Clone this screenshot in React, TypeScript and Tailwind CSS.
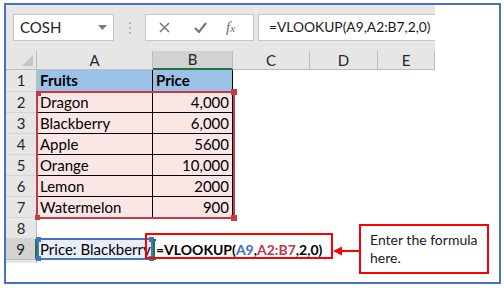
const rows: [string, string][] = [
  ["Dragon", "4,000"],
  ["Blackberry", "6,000"],
  ["Apple", "5600"],
  ["Orange", "10,000"],
  ["Lemon", "2000"],
  ["Watermelon", "900"],
];

const cols = ["A", "B", "C", "D", "E"];

function Handle({ className }: { className: string }) {
  return <div className={"absolute h-[5px] w-[5px] " + className} />;
}

function RowHead({ n, active }: { n: number; active?: boolean }) {
  return (
    <div
      className={
        "flex items-center justify-center border-b text-[15px] text-[#262626] " +
        (active
          ? "border-b-[#bdbdbd] bg-[#d2d2d2] border-r-2 border-r-[#217346]"
          : "border-b-[#d4d4d4] bg-[#e6e6e6] border-r border-r-[#bdbdbd]")
      }
    >
      {n}
    </div>
  );
}

function FormulaBar() {
  return (
    <div className="flex h-[46px] items-start bg-[#e6e6e6] pl-[7px] pt-[9px]">
      <div className="flex h-[27px] w-[101px] items-center justify-between border border-[#c6c6c6] bg-white pl-[6px] pr-[6px] text-[15px] text-[#262626]">
        <span>COSH</span>
        <svg width="9" height="5" viewBox="0 0 9 5">
          <path d="M0 0 L9 0 L4.5 5 Z" fill="#7a7a7a" />
        </svg>
      </div>
      <div className="flex h-[27px] w-[31px] items-center justify-center">
        <div className="flex flex-col gap-[3px]">
          <div className="h-[2px] w-[2px] bg-[#b5b5b5]" />
          <div className="h-[2px] w-[2px] bg-[#b5b5b5]" />
          <div className="h-[2px] w-[2px] bg-[#b5b5b5]" />
        </div>
      </div>
      <div className="flex h-[27px] w-[109px] items-center border border-[#c6c6c6] bg-white">
        <svg className="ml-[13px]" width="11" height="11" viewBox="0 0 11 11">
          <path d="M1 1 L10 10 M10 1 L1 10" stroke="#7a7a7a" strokeWidth="1.6" />
        </svg>
        <svg className="ml-[24px]" width="13" height="11" viewBox="0 0 13 11">
          <path d="M1 6 L5 10 L12 1" stroke="#7a7a7a" strokeWidth="2.2" fill="none" />
        </svg>
        <span className="ml-[19px] font-['Liberation_Serif',serif] text-[15px] italic text-[#6e6e6e]">
          f<span className="text-[11px]">x</span>
        </span>
      </div>
      <div className="ml-[4px] flex h-[27px] flex-1 items-center overflow-hidden border-y border-l border-[#c6c6c6] bg-white pl-[10px] text-[13.8px] whitespace-nowrap text-[#1a1a1a]">
        =VLOOKUP(A9,A2:B7,2,0)
      </div>
    </div>
  );
}

export default function App() {
  return (
    <div className="h-[288px] w-[504px] overflow-hidden bg-white pl-[4px] pt-[3px] font-[Lato,'Liberation_Sans',sans-serif]">
      <div className="relative h-[281px] w-[497px] border-2 border-[#4472c4]">
        <div className="w-[429px]">
          <FormulaBar />
          <div className="grid grid-cols-[31px_116px_80px_77px_68px_57px] grid-rows-[19px_22px_repeat(8,21px)_3px]">
            {/* header row */}
            <div className="flex items-end justify-end border-r border-b border-[#bdbdbd] bg-[#e6e6e6] pb-[3px] pr-[3px]">
              <svg width="11" height="11" viewBox="0 0 11 11">
                <path d="M11 0 L11 11 L0 11 Z" fill="#c4c4c4" />
              </svg>
            </div>
            {cols.map((c) => (
              <div
                key={c}
                className={
                  "flex items-center justify-center border-r text-[15px] text-[#262626] " +
                  (c === "B"
                    ? "border-b-2 border-b-[#217346] border-r-[#bdbdbd] bg-[#d2d2d2]"
                    : "border-b border-[#bdbdbd] bg-[#e6e6e6]")
                }
              >
                {c}
              </div>
            ))}

            {/* row 1 */}
            <RowHead n={1} />
            <div className="flex items-center border-r border-b border-black bg-[#9bc2e6] pl-[3px] text-[15px] font-bold text-black">
              Fruits
            </div>
            <div className="flex items-center border-r border-b border-black bg-[#9bc2e6] pl-[3px] text-[15px] font-bold text-black">
              Price
            </div>
            <div />
            <div />
            <div />

            {rows.map(([fruit, price], i) => (
              <div key={fruit} className="contents">
                <RowHead n={i + 2} />
                <div className="flex items-center border-r border-b border-black bg-[#fbe6e6] pl-[3px] text-[15px] text-black">
                  {fruit}
                </div>
                <div className="flex items-center justify-end border-r border-b border-black bg-[#fbe6e6] pr-[3px] text-[15px] text-black">
                  {price}
                </div>
                <div />
                <div />
                <div />
              </div>
            ))}

            {/* row 8 */}
            <RowHead n={8} />
            <div />
            <div />
            <div />
            <div />
            <div />

            {/* row 9 */}
            <RowHead n={9} active />
            <div className="flex items-center overflow-hidden bg-[#e8eef8] pl-[3px] text-[15px] whitespace-nowrap text-black">
              Price: Blackberry
            </div>
            <div className="relative z-10 flex items-center border-2 border-[#217346] bg-white pl-[1px] text-[14px] font-bold whitespace-nowrap text-black">
              <span className="bg-white">
                =VLOOKUP(<span className="text-[#3a6fc7]">A9</span>,
                <span className="text-[#c0394b]">A2:B7</span>,2,0)
              </span>
            </div>
            <div />
            <div />
            <div />

            {/* row 10 sliver */}
            <div className="bg-[#e6e6e6] border-r border-[#bdbdbd]" />
            <div />
            <div />
            <div />
            <div />
            <div />
          </div>
        </div>

        {/* range highlight A2:B7 */}
        <div className="absolute left-[30px] top-[86px] h-[128px] w-[199px] border-2 border-[#c43b47]">
          <Handle className="-left-[2px] -top-[2px] h-[4px] w-[4px] bg-[#c43b47]" />
          <Handle className="-right-[4px] -top-[4px] h-[6px] w-[6px] bg-[#c43b47]" />
          <Handle className="-left-[3px] -bottom-[3px] bg-[#c43b47]" />
          <Handle className="-right-[4px] -bottom-[4px] h-[6px] w-[6px] bg-[#c43b47]" />
        </div>

        {/* reference highlight A9 */}
        <div className="absolute left-[31px] top-[233px] h-[22px] w-[116px] border-2 border-[#4472c4]">
          <Handle className="-left-[3px] -top-[3px] bg-[#4472c4]" />
          <Handle className="-right-[3px] -top-[3px] bg-[#4472c4]" />
          <Handle className="-left-[3px] -bottom-[3px] bg-[#4472c4]" />
          <Handle className="-right-[3px] -bottom-[3px] bg-[#4472c4]" />
        </div>

        {/* annotation box */}
        <div className="absolute left-[139px] top-[228px] z-20 h-[26px] w-[188px] border-2 border-[#ff0000]" />

        {/* arrow */}
        <svg className="absolute left-[327px] top-[241px] z-20" width="27" height="10" viewBox="0 0 27 10">
          <path d="M0 5 L9 0.5 L9 9.5 Z" fill="#ff0000" />
          <path d="M8 5 L27 5" stroke="#ff0000" strokeWidth="2" />
        </svg>

        {/* callout */}
        <div className="absolute left-[353px] top-[219px] z-20 flex h-[50px] w-[130px] flex-col justify-center border-2 border-[#ff0000] bg-white pl-[9px] text-[14px] leading-[18px] text-[#1a1a1a]">
          <span>Enter the formula</span>
          <span>here.</span>
        </div>
      </div>
    </div>
  );
}
